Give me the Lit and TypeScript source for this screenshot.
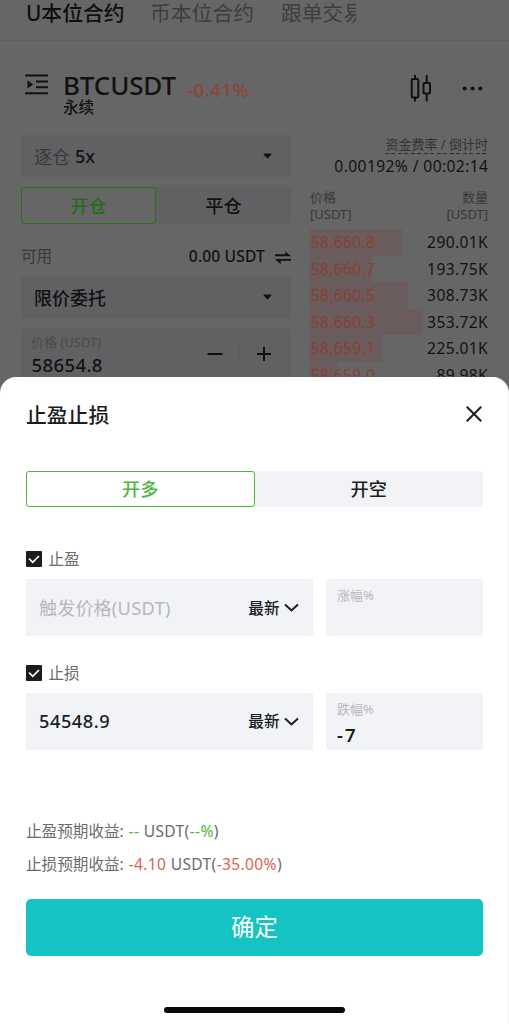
import { LitElement, html, css, svg } from "lit";
import { customElement } from "lit/decorators.js";

const asks = [
  { price: "58,660.8", amount: "290.01K", depth: 92 },
  { price: "58,660.7", amount: "193.75K", depth: 62 },
  { price: "58,660.5", amount: "308.73K", depth: 98 },
  { price: "58,660.3", amount: "353.72K", depth: 113 },
  { price: "58,659.1", amount: "225.01K", depth: 72 },
  { price: "58,659.0", amount: "89.98K", depth: 28 },
];

const caret = html`<svg class="caret" width="9" height="6" viewBox="0 0 9 6"><path d="M1.2.5h6.6q1 0 .5.9L5.2 5q-.7.8-1.4 0L.7 1.4Q.2.5 1.2.5Z" fill="#101010"/></svg>`;

const stroke = (w: number, h: number, d: string, color = "#111", sw = 2) => html`
  <svg width=${w} height=${h} viewBox="0 0 ${w} ${h}" fill="none" stroke=${color} stroke-width=${sw}>
    ${svg`<path d=${d} />`}
  </svg>`;

@customElement("trade-page")
class TradePage extends LitElement {
  static styles = css`
    :host { display: block; height: 377px; overflow: hidden; background: #666; color: #121212; }
    svg { display: block; }
    .nav { display: flex; height: 40px; border-bottom: 1px solid #606062; padding-left: 26px; box-sizing: content-box; }
    .nav span { line-height: 27px; font-size: 20.8px; white-space: nowrap; color: #3d3d3f; }
    .nav .on { color: #0f0f0f; font-weight: 500; width: 124px; }
    .nav .coin { width: 131px; }
    .nav .copy { width: 75px; overflow: hidden; }
    .head { display: flex; height: 94px; }
    .menu { padding: 33px 0 0 24px; width: 39px; }
    .pair { width: 124px; padding-top: 30px; }
    .pair b { display: block; font-weight: 500; font-size: 26px; line-height: 28px; letter-spacing: -.15px; }
    .pair i { display: block; font-style: normal; font-weight: 500; font-size: 15.6px; line-height: 17px; }
    .change { flex: 1; padding-top: 36px; line-height: 26px; font-size: 18.5px; font-weight: 500; letter-spacing: .6px; color: #8e4336; }
    .candle { padding: 33px 30.500px 0 0; }
    .dots { padding: 45px 26px 0 0; }
    .cols { display: flex; gap: 19px; padding: 0 21px; }
    .left { width: 270px; display: flex; flex-direction: column; gap: 10px; }
    .box { display: flex; align-items: center; height: 42px; border-radius: 3px; background: #616164; box-sizing: border-box; padding: 0 19px 0 13px; font-size: 18px; font-weight: 500; }
    .box em { font-style: normal; font-weight: 400; color: #39393b; margin-right: 5px; }
    .caret { margin-left: auto; }
    .tabs { display: flex; height: 37px; border-radius: 3px; background: #616164; font-size: 18.2px; font-weight: 500; text-align: center; line-height: 38px; }
    .tabs span { width: 50%; box-sizing: border-box; }
    .tabs .on { border: 1px solid #2a711b; border-radius: 3px; background: #666; line-height: 36px; color: #276b19; }
    .avail { display: flex; align-items: center; height: 32px; box-sizing: border-box; padding-top: 11px; line-height: 20px; font-size: 15.6px; color: #39393b; }
    .avail b { margin-left: auto; margin-right: 10px; font-weight: 500; color: #121212; letter-spacing: .15px; }
    .avail svg { margin-top: 4px; }
    .price { display: flex; align-items: flex-start; height: 60px; background: #616164; border-radius: 3px; padding-left: 10px; }
    .price div { width: 176px; }
    .price small { display: block; margin-top: 5px; font-size: 13px; line-height: 19px; color: #4d4848; }
    .price b { display: block; font-size: 18.5px; line-height: 25px; font-weight: 500; padding-left: .5px; letter-spacing: .4px; }
    .price .plus { margin-left: 16px; border-left: 1px solid #5c5c5f; padding: 7px 0 0 17px; margin-top: 12px; height: 20px; box-sizing: border-box; }
    .minus { margin-top: 18px; }
    .right { width: 178px; }
    .rate { display: flex; justify-content: flex-end; height: 19px; }
    .rate span { font-size: 13px; line-height: 18px; background: repeating-linear-gradient(90deg, #2e2e30 0 4px, transparent 4px 6.5px) 0 100% / 100% 1px no-repeat; color: #343436; white-space: nowrap; }
    .time { display: flex; justify-content: flex-end; font-size: 15.6px; line-height: 24px; letter-spacing: .4px; white-space: nowrap; margin-right: -.4px; }
    .hd { display: flex; justify-content: space-between; font-size: 13px; line-height: 17px; color: #38383a; padding: 11px 0 6px; }
    .hd span + span { text-align: right; }
    .ask { display: flex; justify-content: space-between; align-items: center; height: 26.5px; font-size: 15.6px; letter-spacing: .35px; }
    .bar { height: 26.5px; line-height: 26.5px; background: #6a5c5d; white-space: nowrap; color: #893f33; text-indent: .7px; }
  `;
  render() {
    return html`
      <div class="nav"><span class="on">U本位合约</span><span class="coin">币本位合约</span><span class="copy">跟单交易</span></div>
      <div class="head">
        <div class="menu">
          <svg width="25" height="21" viewBox="0 0 25 21"><path d="M1 1.5h23M12 7.5h12M12 13.3h12M1 19.3h23" stroke="#111" stroke-width="2"/><path d="M3.5 6.3 9 10.4l-5.500 4.100Z" fill="#111"/></svg>
        </div>
        <div class="pair"><b>BTCUSDT</b><i>永续</i></div>
        <div class="change">-0.41%</div>
        <div class="candle">
          <svg width="22" height="28" viewBox="0 0 22 28" fill="none" stroke="#111" stroke-width="2"><path d="M5 1v4M5 23.500v4M16.700 1v8M16.700 19.500v8"/><rect x="1.700" y="5" width="6.600" height="18.500" rx="1"/><rect x="13.500" y="9" width="6.500" height="10.500" rx="1"/></svg>
        </div>
        <div class="dots"><svg width="21" height="5" viewBox="0 0 21 5" fill="#111"><circle cx="2.700" cy="2.500" r="2"/><circle cx="10.500" cy="2.500" r="2"/><circle cx="18.300" cy="2.500" r="2"/></svg></div>
      </div>
      <div class="cols">
        <div class="left">
          <div class="box"><em>逐仓</em>5x${caret}</div>
          <div class="tabs"><span class="on">开仓</span><span>平仓</span></div>
          <div class="avail">可用<b>0.00 USDT</b><svg width="16" height="14" viewBox="0 0 16 14" fill="#111"><path d="M0 3.200h10.300V.4l5.700 4.800H0ZM16 9.800H5.700v3.400L0 8h16Z"/></svg></div>
          <div class="box">限价委托${caret}</div>
          <div class="price">
            <div><small>价格 (USDT)</small><b>58654.8</b></div>
            <span class="minus">${stroke(16, 16, "M.5 8h15")}</span>
            <span class="plus">${stroke(14, 14, "M0 7h14M7 0v14")}</span>
          </div>
        </div>
        <div class="right">
          <div class="rate"><span>资金费率 / 倒计时</span></div>
          <div class="time">0.00192% / 00:02:14</div>
          <div class="hd"><span>价格<br>[USDT]</span><span>数量<br>[USDT]</span></div>
          ${asks.map(a => html`<div class="ask"><div class="bar" style="width:${a.depth}px">${a.price}</div><span>${a.amount}</span></div>`)}
        </div>
      </div>`;
  }
}

@customElement("order-sheet")
class OrderSheet extends LitElement {
  static styles = css`
    :host { display: block; height: 647px; box-sizing: border-box; background: #fff; border-radius: 16px 16px 0 0; border-right: 1px solid #f0f0f0; padding: 0 25px 0 26px; color: #1b1c1e; }
    .title { display: flex; justify-content: space-between; align-items: center; height: 75px; box-sizing: border-box; padding-bottom: 2px; font-size: 20.8px; font-weight: 500; }
    .title svg { margin-right: 1px; }
    .tabs { display: flex; height: 36px; margin-top: 19px; border-radius: 3px; background: #f2f3f7; font-size: 18.2px; line-height: 37px; font-weight: 500; text-align: center; }
    .tabs span { width: 50%; box-sizing: border-box; }
    .tabs .on { border: 1.500px solid #4db83a; border-radius: 3px; background: #fff; color: #4db83a; line-height: 35px; }
    .check { display: flex; align-items: center; gap: 6.500px; height: 20px; line-height: 20px; font-size: 15.600px; color: #696c70; }
    .first { margin-top: 42px; }
    .second { margin-top: 26.500px; }
    .row { display: flex; gap: 13px; height: 57px; margin-top: 10px; }
    .field { width: 287px; box-sizing: border-box; background: #f2f3f7; display: flex; align-items: center; padding: 0 14.500px 0 13px; font-size: 18.200px; line-height: 24px; font-weight: 500; }
    .hint { color: #b8b8b8; font-weight: 400; }
    .lat { letter-spacing: .35px; }
    .num { letter-spacing: .55px; }
    .last { display: flex; align-items: center; gap: 4px; margin-left: auto; font-size: 15.600px; }
    .pct { flex: 1; background: #f2f3f7; border-radius: 3px; padding: 6px 0 0 11px; box-sizing: border-box; }
    .pct small { display: block; font-size: 13px; line-height: 20px; color: #b8b8b8; }
    .pct b { display: block; font-size: 18.500px; line-height: 32px; font-weight: 600; letter-spacing: 2px; }
    .sum { font-size: 15.600px; line-height: 33.500px; color: #696c70; white-space: nowrap; }
    .gap { margin-top: 65px; }
    .up { color: #4db83a; }
    .down { color: #dd6452; }
    .ok { height: 57px; border-radius: 5px; margin-top: 17.500px; background: #15c3c5; color: #fff; font-size: 23.400px; line-height: 57px; text-align: center; }
    .home { height: 6px; width: 181px; border-radius: 3px; background: #090909; margin: 51px auto 0; }
    svg { display: block; }
  `;
  check(label: string, cls: string) {
    return html`<div class="check ${cls}"><svg width="16" height="16" viewBox="0 0 16 16"><rect width="16" height="16" rx="1" fill="#1b1c1e"/><path d="m3 7.500 3.700 3.800L13 5" fill="none" stroke="#fff" stroke-width="1.700"/></svg>${label}</div>`;
  }
  latest() {
    return html`<span class="last">最新${stroke(15, 9, "M1 1.5l6.5 6 6.500-6", "#1b1c1e", 2)}</span>`;
  }
  render() {
    return html`
      <div class="title">止盈止损${stroke(16, 16, "M.8.8l14.400 14.400M15.200.8.8 15.200", "#1b1c1e", 2)}</div>
      <div class="tabs"><span class="on">开多</span><span>开空</span></div>
      ${this.check("止盈", "first")}
      <div class="row"><div class="field"><span class="hint">触发价格<span class="lat">(USDT)</span></span>${this.latest()}</div><div class="pct"><small>涨幅%</small></div></div>
      ${this.check("止损", "second")}
      <div class="row"><div class="field"><span class="num">54548.9</span>${this.latest()}</div><div class="pct"><small>跌幅%</small><b>-7</b></div></div>
      <div class="sum gap">止盈预期收益<span class="lat">: <span class="up">--</span> USDT(<span class="up">--%</span>)</span></div>
      <div class="sum">止损预期收益<span class="lat">: <span class="down">-4.10</span> USDT(<span class="down">-35.00%</span>)</span></div>
      <div class="ok">确定</div>
      <div class="home"></div>`;
  }
}

@customElement("app-root")
class AppRoot extends LitElement {
  static styles = css`
    :host { display: block; height: 1024px; overflow: hidden; background: #666; font-family: "Noto Sans", "Noto Sans CJK SC", sans-serif; }
  `;
  render() {
    return html`<trade-page></trade-page><order-sheet></order-sheet>`;
  }
}
